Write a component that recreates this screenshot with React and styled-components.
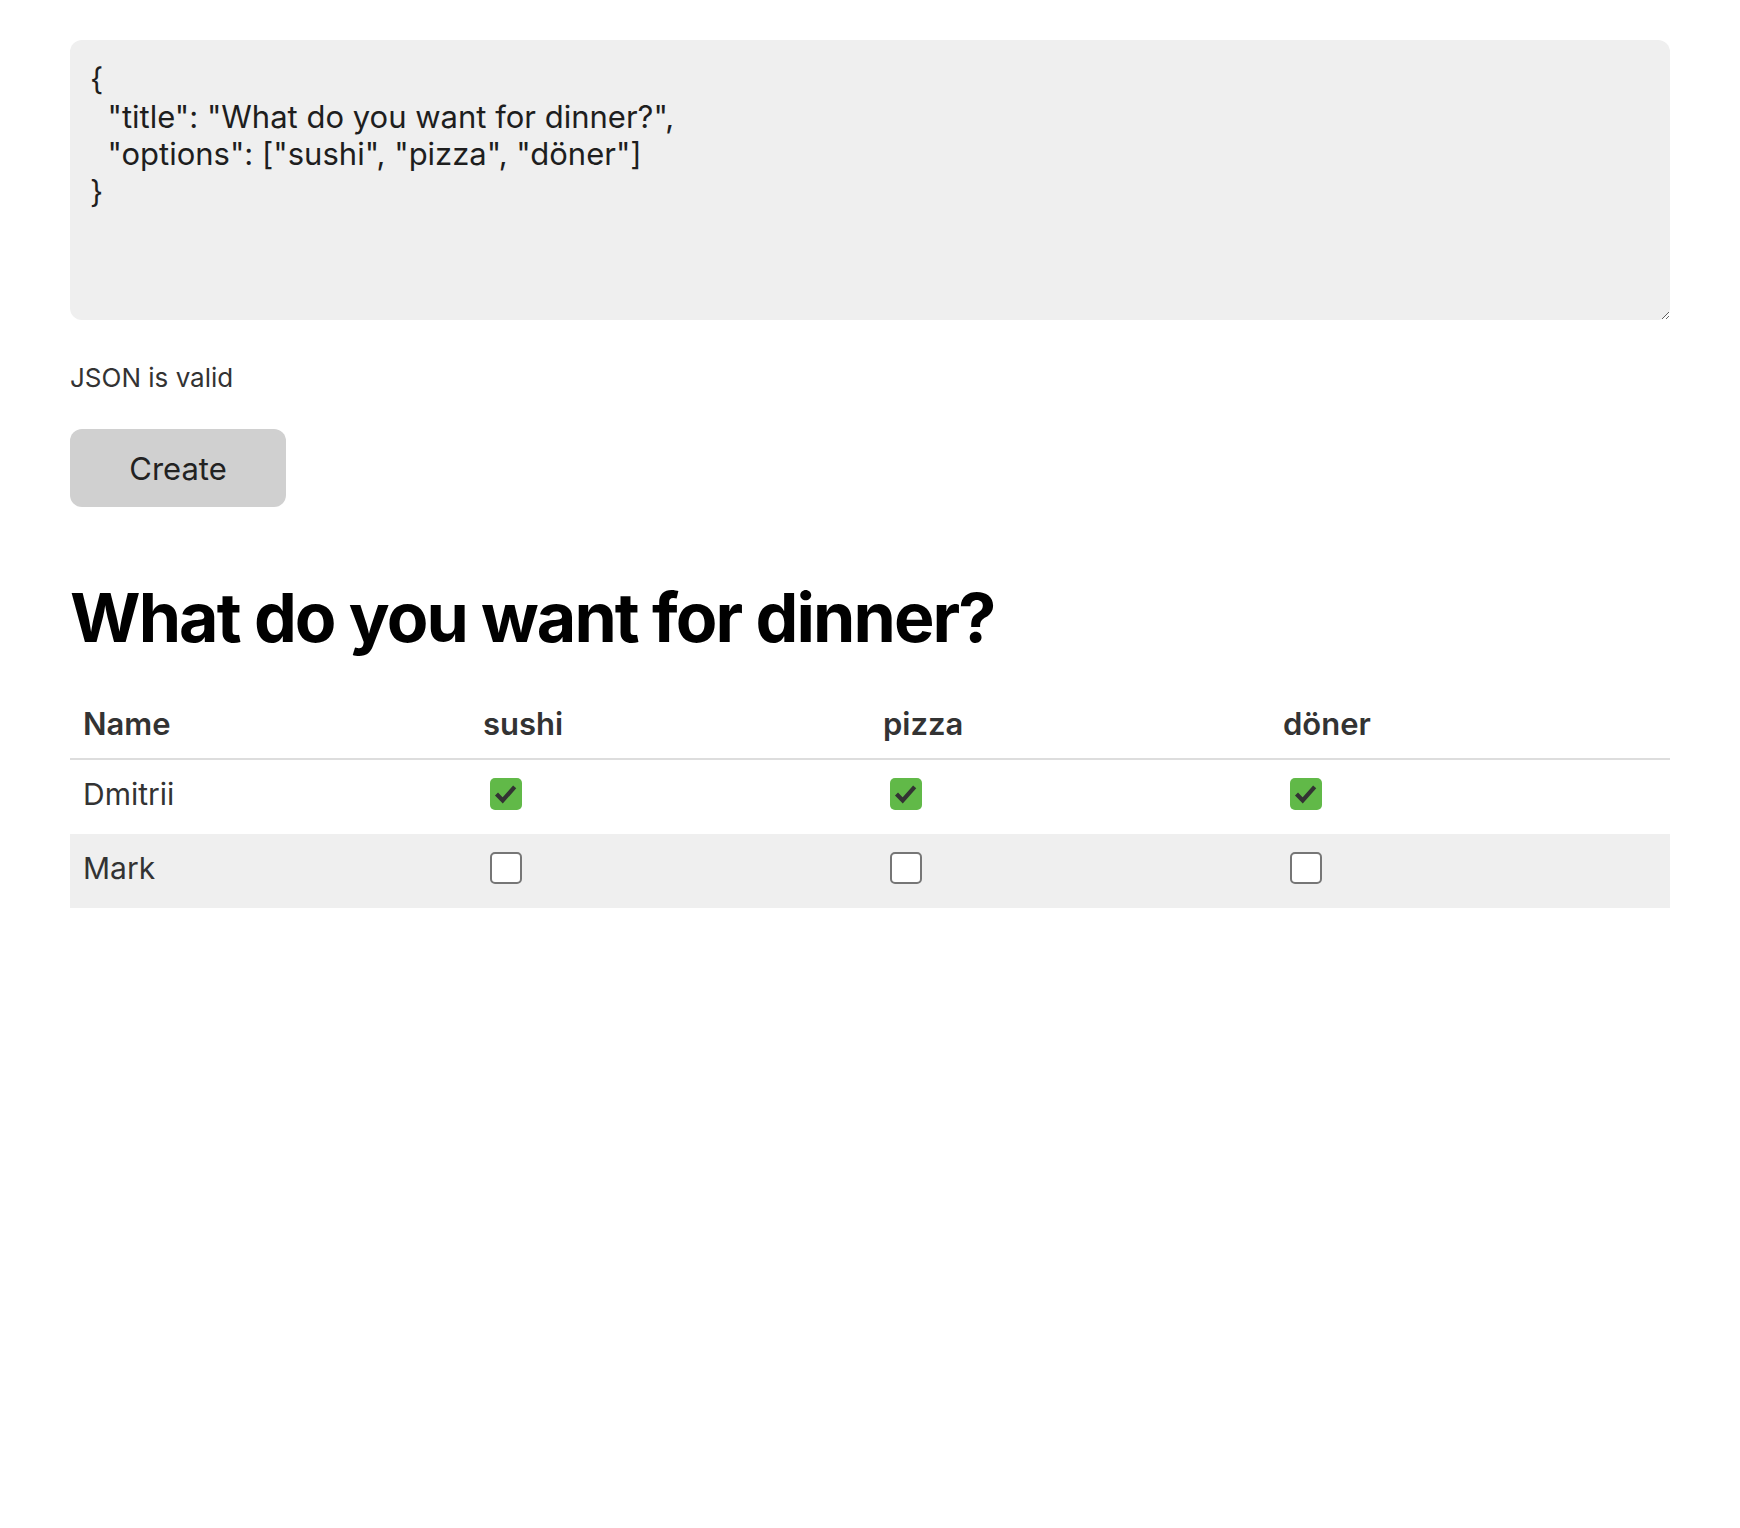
import { useState } from "react";
import styled, { createGlobalStyle } from "styled-components";

const GlobalStyle = createGlobalStyle`
body {
    margin: 0;
    background: #fff;
    font-family: Inter, "Noto Sans", sans-serif;
    color: #333;
}
`;

const Page = styled.div`
display: flex;
flex-direction: column;
align-items: flex-start;
max-width: 1600px;
margin: 0 auto;
padding-top: 40px;
`;

const Editor = styled.textarea`
box-sizing: border-box;
width: 100%;
height: 280px;
padding: 20px 20px;
border: none;
border-radius: 12px;
background: #efefef;
color: #1e1e1e;
font-family: Inter, "Noto Sans", sans-serif;
font-size: 31px;
line-height: 37.7px;
resize: vertical;
outline: none;
`;

const Status = styled.div`
margin-top: 42px;
font-size: 26px;
line-height: 32px;
color: ${props => props.valid ? '#333' : '#c0392b'};
`;

const CreateButton = styled.button`
margin-top: 35px;
width: 216px;
height: 78px;
border: none;
border-radius: 12px;
background: #d0d0d0;
color: #222;
font-family: Inter, "Noto Sans", sans-serif;
font-size: 31px;
cursor: pointer;
`;

const Title = styled.h1`
margin: 68px 0 0;
font-size: 68px;
line-height: 84px;
font-weight: 700;
color: #000;
letter-spacing: -1.9px;
`;

const Table = styled.table`
width: 100%;
margin-top: 30px;
border-collapse: collapse;
table-layout: fixed;
`;

const HeadCell = styled.th`
text-align: left;
padding: 14px 13px 13px;
font-size: 31px;
line-height: 42px;
font-weight: 600;
color: #333;
border-bottom: 2px solid #dddddd;
`;

const Row = styled.tr`
background: ${props => props.striped ? '#efefef' : 'transparent'};
`;

const Cell = styled.td`
padding: 13px 13px 18px;
font-size: 30px;
line-height: 42px;
color: #333;
vertical-align: middle;
`;

const CheckLabel = styled.label`
display: inline-flex;
margin: 0 0 6px 7px;
vertical-align: middle;
cursor: pointer;
& input {
    display: none;
}
`;

const Box = styled.span`
box-sizing: border-box;
display: flex;
align-items: center;
justify-content: center;
width: 32px;
height: 32px;
border-radius: 5px;
background: ${props => props.checked ? '#61b948' : '#fff'};
border: ${props => props.checked ? 'none' : '2px solid #767676'};
`;

const CheckBox = ({ checked, onChange }) => (
    <CheckLabel>
        <input type="checkbox" checked={checked} onChange={onChange} />
        <Box checked={checked}>
            {checked && (
                <svg width="32" height="32" viewBox="0 0 32 32">
                    <path d="M6.5 16 L12.7 22.5 L24.7 8.8" fill="none" stroke="#333" strokeWidth="4.2" strokeLinecap="butt" strokeLinejoin="miter" />
                </svg>
            )}
        </Box>
    </CheckLabel>
);

const initialText = `{
  "title": "What do you want for dinner?",
  "options": ["sushi", "pizza", "döner"]
}`;

const App = () => {
    const [text, setText] = useState(initialText);
    const [poll, setPoll] = useState(JSON.parse(initialText));
    const [votes, setVotes] = useState([
        { name: "Dmitrii", picks: [true, true, true] },
        { name: "Mark", picks: [false, false, false] },
    ]);

    let valid = true;
    let parsed = null;
    try {
        parsed = JSON.parse(text);
    } catch (e) {
        valid = false;
    }

    const toggle = (r, c) => {
        setVotes(votes.map((v, i) => i !== r ? v : {
            ...v,
            picks: v.picks.map((p, j) => j === c ? !p : p),
        }));
    };

    return (
        <Page>
            <GlobalStyle />
            <Editor value={text} onChange={(e) => setText(e.target.value)} spellCheck={false} />
            <Status valid={valid}>{valid ? "JSON is valid" : "JSON is invalid"}</Status>
            <CreateButton onClick={() => valid && setPoll(parsed)}>Create</CreateButton>
            <Title>{poll.title}</Title>
            <Table>
                <thead>
                    <tr>
                        <HeadCell>Name</HeadCell>
                        {poll.options.map(o => <HeadCell key={o}>{o}</HeadCell>)}
                    </tr>
                </thead>
                <tbody>
                    {votes.map((v, r) => (
                        <Row key={v.name} striped={r % 2 === 1}>
                            <Cell>{v.name}</Cell>
                            {poll.options.map((o, c) => (
                                <Cell key={o}>
                                    <CheckBox checked={!!v.picks[c]} onChange={() => toggle(r, c)} />
                                </Cell>
                            ))}
                        </Row>
                    ))}
                </tbody>
            </Table>
        </Page>
    );
};

export default App;
